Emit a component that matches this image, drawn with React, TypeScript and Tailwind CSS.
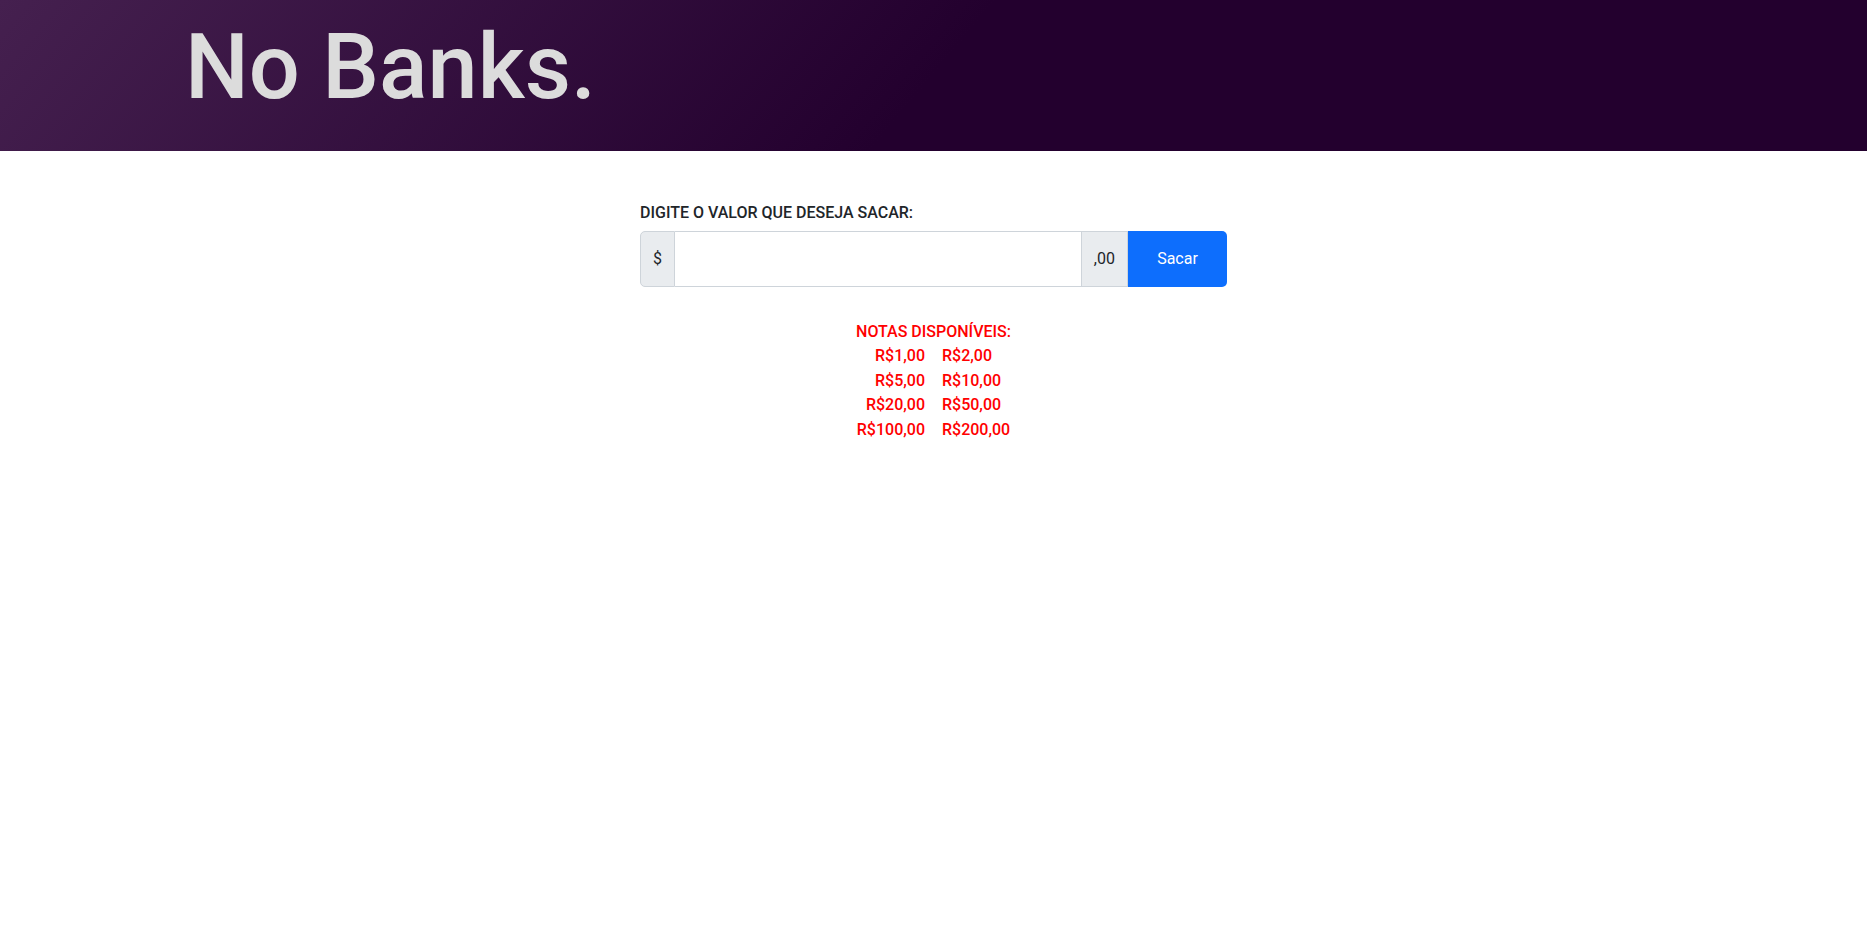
import { useState } from 'react';

// Cédulas disponíveis no caixa
const notas = [
  ['R$1,00', 'R$2,00'],
  ['R$5,00', 'R$10,00'],
  ['R$20,00', 'R$50,00'],
  ['R$100,00', 'R$200,00'],
];

export default function App() {
  const [valor, setValor] = useState('');

  return (
    <div className="min-h-screen bg-white font-['Roboto',sans-serif] text-[#212529]">
      {/* Header */}
      <header className="h-[151px] bg-[linear-gradient(130deg,#45204f_0%,#23002e_50%,#23002e_100%)]">
        <h1 className="pl-[185px] pt-[14px] text-[90px] leading-[1.2] font-medium text-[#dcdcdc]">
          No Banks.
        </h1>
      </header>

      {/* Saque */}
      <main className="pt-[50px]">
        <div className="mx-auto w-[587px]">
          <label className="block mb-[6px] text-base leading-6 font-medium">
            DIGITE O VALOR QUE DESEJA SACAR:
          </label>
          <div className="flex h-[56px] w-full">
            <span className="flex items-center px-3 bg-[#e9ecef] border border-[#ced4da] rounded-l-[5px] text-base">
              $
            </span>
            <input
              type="text"
              value={valor}
              onChange={(e) => setValor(e.target.value)}
              className="flex-1 min-w-0 border-y border-[#ced4da] px-3 text-base outline-none"
            />
            <span className="flex items-center px-3 bg-[#e9ecef] border border-[#ced4da] text-base">
              ,00
            </span>
            <button className="w-[99px] bg-[#0d6efd] text-white text-base rounded-r-[5px]">
              Sacar
            </button>
          </div>
        </div>

        <div className="mt-[33px] flex flex-col items-center text-[#ff0000] font-medium text-base leading-6">
          <p>NOTAS DISPONÍVEIS:</p>
          <div className="grid grid-cols-[auto_auto] gap-x-[17px] leading-[24.6px]">
            {notas.map(([a, b]) => (
              <div key={a} className="contents">
                <span className="text-right">{a}</span>
                <span className="text-left">{b}</span>
              </div>
            ))}
          </div>
        </div>
      </main>
    </div>
  );
}
